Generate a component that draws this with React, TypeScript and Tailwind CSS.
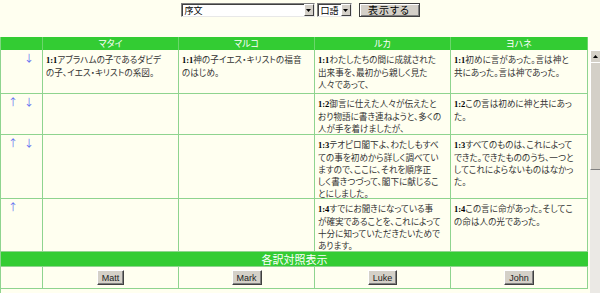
import React from "react";

type Verse = { n: string; lines: string[] } | null;

const rows: { up: boolean; down: boolean; h: string; cells: Verse[] }[] = [
  {
    up: false,
    down: true,
    h: "h-[44px]",
    cells: [
      { n: "1:1", lines: ["アブラハムの子であるダビデ", "の子、イエス・キリストの系図。"] },
      { n: "1:1", lines: ["神の子イエス・キリストの福音", "のはじめ。"] },
      { n: "1:1", lines: ["わたしたちの間に成就された", "出来事を、最初から親しく見た", "人々であって、"] },
      { n: "1:1", lines: ["初めに言があった。言は神と", "共にあった。言は神であった。"] },
    ],
  },
  {
    up: true,
    down: true,
    h: "h-[41px]",
    cells: [
      null,
      null,
      { n: "1:2", lines: ["御言に仕えた人々が伝えたと", "おり物語に書き連ねようと、多くの", "人が手を着けましたが、"] },
      { n: "1:2", lines: ["この言は初めに神と共にあっ", "た。"] },
    ],
  },
  {
    up: true,
    down: true,
    h: "h-[64px]",
    cells: [
      null,
      null,
      {
        n: "1:3",
        lines: [
          "テオピロ閣下よ、わたしもすべ",
          "ての事を初めから詳しく調べてい",
          "ますので、ここに、それを順序正",
          "しく書きつづって、閣下に献じるこ",
          "とにしました。",
        ],
      },
      {
        n: "1:3",
        lines: ["すべてのものは、これによって", "できた。できたもののうち、一つと", "してこれによらないものはなかっ", "た。"],
      },
    ],
  },
  {
    up: true,
    down: false,
    h: "h-[53px]",
    cells: [
      null,
      null,
      {
        n: "1:4",
        lines: ["すでにお聞きになっている事", "が確実であることを、これによって", "十分に知っていただきたいためで", "あります。"],
      },
      { n: "1:4", lines: ["この言に命があった。そしてこ", "の命は人の光であった。"] },
    ],
  },
];

const widths = ["w-[136px]", "w-[136px]", "w-[136px]", "w-[137px]"];
const heads = ["マタイ", "マルコ", "ルカ", "ヨハネ"];
const btns = ["Matt", "Mark", "Luke", "John"];

function VerseText({ v }: { v: Verse }) {
  if (!v) return null;
  return (
    <div className="text-[8.6px] leading-[12px] text-[#333]">
      {v.lines.map((l, i) => (
        <div key={i} className="whitespace-nowrap">
          {i === 0 && (
            <b className="font-['Liberation_Serif',serif] font-bold text-[8.5px] text-black">{v.n}</b>
          )}
          {l}
        </div>
      ))}
    </div>
  );
}

function Select({ w, text }: { w: string; text: string }) {
  return (
    <div
      className={`${w} h-[14px] flex bg-white border border-t-[#808080] border-l-[#808080] border-r-[#e8e8e8] border-b-[#e8e8e8] shadow-[inset_1px_1px_0_#404040]`}
    >
      <div className="flex-1 pl-[3px] pt-[1px] text-[9px] leading-[11px] text-black">{text}</div>
      <div className="w-[10px] h-full flex items-center justify-center bg-[#d4d0c8] border border-t-white border-l-white border-r-[#404040] border-b-[#404040]">
        <svg width="5" height="3" viewBox="0 0 5 3">
          <polygon points="0,0 5,0 2.5,3" fill="#000" />
        </svg>
      </div>
    </div>
  );
}

export default function App() {
  return (
    <div className="w-[600px] h-[293px] overflow-hidden bg-[#fffff0] font-['Noto_Sans_CJK_JP','Noto_Sans',sans-serif] [font-feature-settings:'palt']">
      {/* form */}
      <div className="h-[37px] pt-[3px] flex justify-center">
        <div className="flex items-start">
          <Select w="w-[134px]" text="序文" />
          <div className="ml-[2px]">
            <Select w="w-[35px]" text="口語" />
          </div>
          <button className="ml-[7px] w-[61px] h-[14px] bg-[#d4d0c8] border border-[#404040] shadow-[inset_1px_1px_0_#fff,inset_-1px_-1px_0_#808080] text-[10px] leading-[12px] text-black tracking-[1px]">
            表示する
          </button>
        </div>
      </div>

      {/* header */}
      <div className="w-[588px] h-[13px] flex bg-[#33cc33] border-l border-[#7fd87f] text-white text-[9px] leading-[13px]">
        <div className="w-[42px] border-r border-[#6bd66b]" />
        {heads.map((h, i) => (
          <div key={h} className={`${widths[i]} text-center border-r border-[#6bd66b]`}>
            {h}
          </div>
        ))}
      </div>

      <div className="flex">
        {/* body */}
        <div className="w-[588px] border-l border-[#8fd48f]">
          {rows.map((r, ri) => (
            <div key={ri} className={`flex ${r.h} border-b border-[#8fd48f]`}>
              <div className="w-[42px] border-r border-[#8fd48f] pl-[7px] pt-[2px] flex text-[10px] leading-[12px] text-[#6470f0]">
                <span className="w-[8px] text-center">{r.up ? "↑" : ""}</span>
                <span className="w-[8px] ml-[8px] text-center">{r.down ? "↓" : ""}</span>
              </div>
              {r.cells.map((c, ci) => (
                <div key={ci} className={`${widths[ci]} border-r border-[#8fd48f] pl-[3px] pt-[3px]`}>
                  <VerseText v={c} />
                </div>
              ))}
            </div>
          ))}
          <div className="h-[15px] bg-[#33cc33] border-b border-[#8fd48f] flex items-center justify-center text-white text-[11px] leading-[14px]">
            各訳対照表示
          </div>
          <div className="flex h-[22px] border-b border-[#8fd48f]">
            <div className="w-[42px] border-r border-[#8fd48f]" />
            {btns.map((b, i) => (
              <div key={b} className={`${widths[i]} border-r border-[#8fd48f] flex justify-center pt-[3px]`}>
                <button className="h-[15px] px-[4px] bg-[#d4d0c8] border border-t-white border-l-white border-r-[#404040] border-b-[#404040] shadow-[inset_-1px_-1px_0_#808080] font-['Liberation_Sans',sans-serif] text-[9px] leading-[12px] text-[#222]">
                  {b}
                </button>
              </div>
            ))}
          </div>
        </div>

        {/* scrollbar */}
        <div className="ml-[2px] w-[10px] h-[243px] flex flex-col">
          <div className="h-[12px] bg-[#d4d0c8] border-t border-l border-white flex items-center pl-[2px]">
            <svg width="5" height="3" viewBox="0 0 5 3">
              <polygon points="2.5,0 5,3 0,3" fill="#000" />
            </svg>
          </div>
          <div className="h-[108px] bg-[#d4d0c8] border-t border-l border-white border-b border-b-[#808080]" />
          <div className="flex-1 bg-[#ebe9e5]" />
        </div>
      </div>
    </div>
  );
}
